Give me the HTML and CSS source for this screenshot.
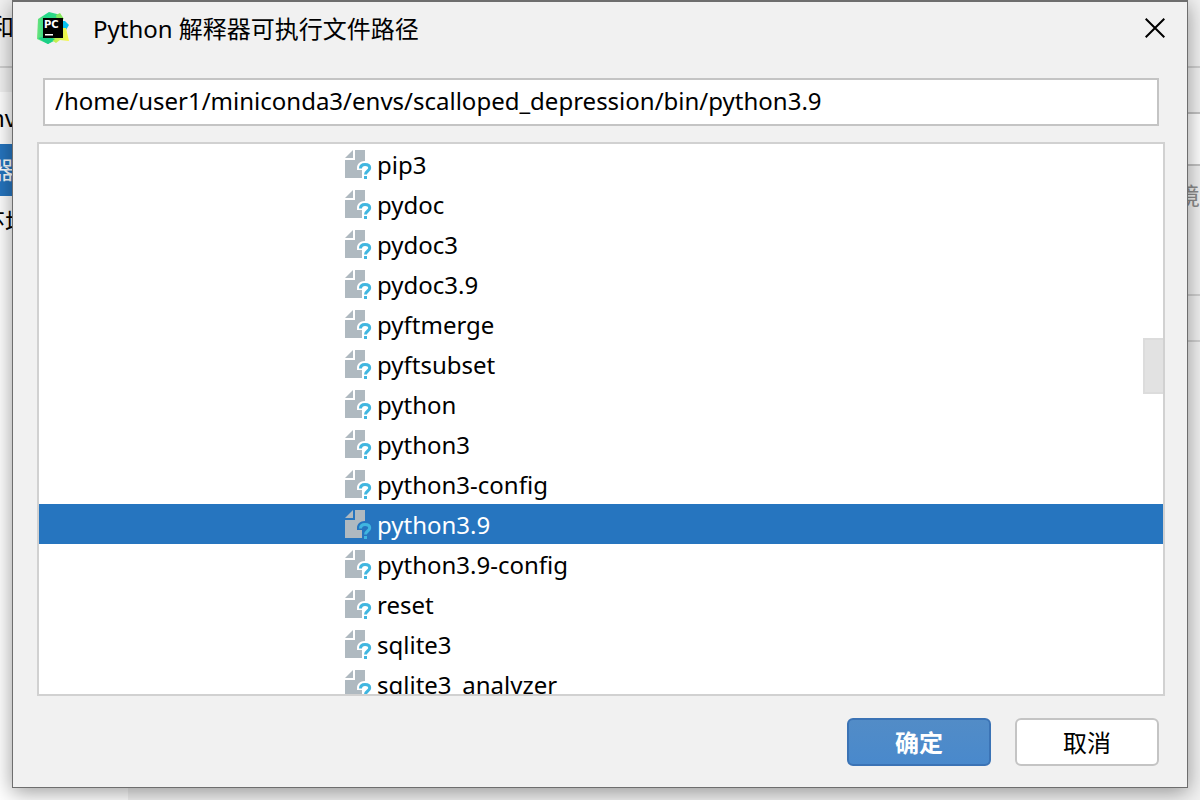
FILE: index.html
```html
<!DOCTYPE html>
<html lang="zh-CN">
<head>
<meta charset="utf-8">
<title>Python 解释器可执行文件路径</title>
<link rel="stylesheet" href="styles.css">
</head>
<body>
<svg class="defs" aria-hidden="true">
  <symbol id="file" viewBox="0 0 28 30">
    <path fill="#afb9c0" d="M0 8 8 0v8zM10 0h10v11c-5 0-8 3-8 7v2h5v8H0V10h10z"/>
    <path fill="none" stroke="#fff" stroke-width="6" class="halo" d="M15.500 18.500C15.500 15.700 17.500 14.500 20 14.500S24.700 15.700 24.700 18C24.700 21 20.500 21 20.500 24.500"/>
    <path fill="none" stroke="#40b6e0" stroke-width="3" d="M15.500 18.500C15.500 15.700 17.500 14.500 20 14.500S24.700 15.700 24.700 18C24.700 21 20.500 21 20.500 24.500"/>
    <path fill="#40b6e0" d="M19 26h3v3h-3z"/>
  </symbol>
</svg>
<div class="backdrop">
  <div class="back-top">和</div>
  <div class="back-main">
    <nav class="back-nav">
      <div class="nav-item latin">nv</div>
      <div class="nav-item selected">器</div>
      <div class="nav-item pair">环境</div>
    </nav>
    <div class="back-panel">
      <div class="panel-head"></div>
      <div class="panel-row"></div>
      <div class="panel-body">境</div>
      <div class="panel-list"></div>
    </div>
  </div>
</div>
<div class="dialog" role="dialog" aria-labelledby="title">
  <header class="titlebar">
    <svg class="logo" viewBox="0 0 32 32" aria-hidden="true">
      <defs>
        <linearGradient id="g" x1="0" y1="0" x2="1" y2="0"><stop offset="0" stop-color="#6fe37a"/><stop offset=".35" stop-color="#21d789"/><stop offset="1" stop-color="#3fdc84"/></linearGradient>
        <linearGradient id="y" x1="0" y1="0" x2="1" y2="0"><stop offset="0" stop-color="#9bea55"/><stop offset="1" stop-color="#fcf84a"/></linearGradient>
      </defs>
      <path fill="url(#g)" d="M1 7 12 0 20 2 25 5v20L11 32 0 27z"/>
      <path fill="#83e85c" d="M19 3 23 1 27 7 20 9z"/>
      <path fill="#07c3f2" d="M24 9 28 9 32 13 29 18H24z"/>
      <path fill="url(#y)" d="M10 25 26 16l3 0 3 13-9-1-4 3z"/>
      <path fill="#1bcf86" d="M1 26 10 24 18 27 11 32z"/>
      <path fill="#000" d="M6 6h20v20H6z"/>
      <text class="logo-text" x="7" y="16">PC</text>
      <path fill="#fff" d="M8 22h8v1.500H8z"/>
    </svg>
    <h1 id="title">Python 解释器可执行文件路径</h1>
    <button class="close" type="button" aria-label="关闭">
      <svg viewBox="0 0 20 20" width="20" height="20"><path fill="none" stroke="#000" stroke-width="2" d="M.7.7l18.600 18.600M19.300.7.700 19.300"/></svg>
    </button>
  </header>
  <input class="path" type="text" aria-label="路径" value="/home/user1/miniconda3/envs/scalloped_depression/bin/python3.9">
  <div class="tree">
    <ul>
      <li><svg><use href="#file"/></svg>pip3</li>
      <li><svg><use href="#file"/></svg>pydoc</li>
      <li><svg><use href="#file"/></svg>pydoc3</li>
      <li><svg><use href="#file"/></svg>pydoc3.9</li>
      <li><svg><use href="#file"/></svg>pyftmerge</li>
      <li><svg><use href="#file"/></svg>pyftsubset</li>
      <li><svg><use href="#file"/></svg>python</li>
      <li><svg><use href="#file"/></svg>python3</li>
      <li><svg><use href="#file"/></svg>python3-config</li>
      <li class="selected"><svg><use href="#file"/></svg>python3.9</li>
      <li><svg><use href="#file"/></svg>python3.9-config</li>
      <li><svg><use href="#file"/></svg>reset</li>
      <li><svg><use href="#file"/></svg>sqlite3</li>
      <li><svg><use href="#file"/></svg>sqlite3_analyzer</li>
    </ul>
    <div class="thumb"></div>
  </div>
  <footer class="actions">
    <button class="btn primary" type="button">确定</button>
    <button class="btn" type="button">取消</button>
  </footer>
</div>
</body>
</html>
```
FILE: styles.css
```css
* { box-sizing: border-box; }
body {
  margin: 0;
  height: 100vh;
  overflow: hidden;
  font: 24px/40px "Noto Sans", "Noto Sans CJK SC", sans-serif;
  color: #000;
}
.defs { position: absolute; width: 0; height: 0; }

.backdrop { height: 100%; display: flex; flex-direction: column; background: #f2f2f2; }
.back-top { height: 68px; padding-top: 7px; text-indent: -10px; border-bottom: 2px solid #d1d1d1; }
.back-main { flex: 1; display: flex; }
.back-nav { width: 128px; margin-top: 24px; background: #fff; overflow: hidden; }
.nav-item { height: 52px; line-height: 52px; text-indent: -10px; }
.nav-item.selected { background: #2675bf; color: #fff; }
.nav-item.pair { text-indent: -19px; }
.back-panel { flex: 1; display: flex; flex-direction: column; text-align: right; color: #8c8c8c; }
.panel-head { height: 46px; border-bottom: 2px solid #c4c4c4; }
.panel-row { height: 52px; background: #fff; border-bottom: 2px solid #c4c4c4; }
.panel-body { height: 130px; padding-top: 10px; border-bottom: 2px solid #d1d1d1; }
.panel-list { height: 46px; border-bottom: 2px solid #d1d1d1; }

.dialog {
  position: absolute;
  inset: 0 12px 12px;
  display: flex;
  flex-direction: column;
  background: #f1f1f1;
  border: 1px solid #6e6e6e;
  border-top-width: 2px;
  box-shadow: 0 4px 20px rgba(0, 0, 0, .4);
}
.titlebar { display: flex; align-items: center; height: 52px; padding: 0 22px 0 24px; }
.logo { width: 32px; height: 32px; }
.logo-text { font: bold 10px "DejaVu Sans", sans-serif; fill: #fff; }
h1 { flex: 1; margin: 0; padding: 2px 0 0 24px; font-size: 24px; font-weight: 400; }
.close { display: flex; padding: 0; border: 0; background: none; }
.path {
  height: 48px;
  margin: 24px 28px 16px 30px;
  padding: 0 10px 4px;
  border: 2px solid #c4c4c4;
  background: #fff;
  font: inherit;
  color: inherit;
  outline: 0;
}
.tree {
  position: relative;
  flex: 1;
  min-height: 0;
  margin: 0 22px 0 24px;
  border: 2px solid #d1d1d1;
  background: #fff;
  overflow: hidden;
}
.tree ul { margin: 0; padding: 0; list-style: none; }
.tree li { display: flex; align-items: center; gap: 4px; height: 40px; padding: 2px 0 0 306px; }
.tree li.selected { background: #2675bf; color: #fff; }
.tree svg { width: 28px; height: 30px; }
.halo { stroke: #fff; }
.tree .selected { --halo: #2675bf; }
.halo { stroke: var(--halo, #fff); }
.thumb {
  position: absolute;
  top: 194px;
  right: 0;
  width: 20px;
  height: 56px;
  background: #e2e2e2;
  border: 2px solid #dcdcdc;
  border-right: 0;
}
.actions { display: flex; justify-content: flex-end; gap: 24px; padding: 22px 28px 21px; }
.btn {
  width: 144px;
  height: 48px;
  padding: 2px 0 0;
  border: 2px solid #c4c4c4;
  border-radius: 6px;
  background: #fff;
  font: inherit;
  color: inherit;
}
.btn.primary {
  border-color: #3b73b5;
  background: linear-gradient(#528cc7, #4989cc);
  color: #fff;
  font-weight: 700;
}
```
